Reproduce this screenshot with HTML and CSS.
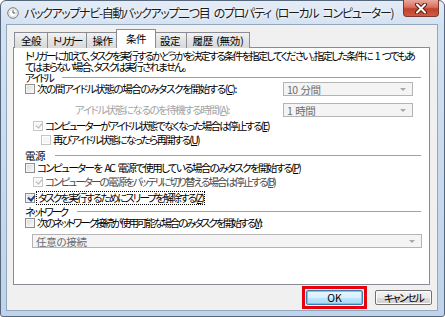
FILE: index.html
```html
<!DOCTYPE html>
<html lang="ja">
<head>
<meta charset="utf-8">
<link rel="stylesheet" href="styles.css">
</head>
<body>
<div class="window">
  <div class="titlebar">
    <svg class="app-icon" width="12" height="12" viewBox="0 0 12 12">
      <circle cx="6" cy="6" r="5.3" fill="#f4f4f4" stroke="#7d7d7d" stroke-width="1"/>
      <circle cx="6" cy="6" r="3.8" fill="#ffffff" stroke="#c8c8c8" stroke-width="0.6"/>
      <path d="M6 3.2V6H8.3" fill="none" stroke="#4d4d4d" stroke-width="1"/>
    </svg>
    <span class="title">バックアップナビ-自動バックアップ二つ目 のプロパティ (ローカル コンピューター)</span>
    <div class="close">
      <svg width="14" height="11" viewBox="0 0 14 11">
        <path d="M3 1.5L11 9.5M11 1.5L3 9.5" stroke="#5a1f17" stroke-width="4" stroke-linecap="round"/>
        <path d="M3 1.5L11 9.5M11 1.5L3 9.5" stroke="#ffffff" stroke-width="2" stroke-linecap="round"/>
      </svg>
    </div>
  </div>
  <div class="client">
    <div class="tabs">
      <div class="tab">全般</div>
      <div class="tab kana">トリガー</div>
      <div class="tab">操作</div>
      <div class="tab selected">条件</div>
      <div class="tab">設定</div>
      <div class="tab wide-tab">履歴 (無効)</div>
    </div>
    <div class="panel">
      <p class="desc">トリガーに加えて、タスクを実行するかどうかを決定する条件を指定してください。指定した条件に 1 つでもあ<br>てはまらない場合、タスクは実行されません。</p>

      <div class="group-head"><span>アイドル</span><i class="rule"></i></div>
      <div class="row r-idle1">
        <span class="chk"></span><span class="lbl ls-1">次の間アイドル状態の場合のみタスクを開始する(<u>C</u>):</span>
        <div class="combo"><span>10 分間</span><i class="arrow"></i></div>
      </div>
      <div class="row r-idle2">
        <span class="lbl ls-2 dim ind-label">アイドル状態になるのを待機する時間(<u>A</u>):</span>
        <div class="combo"><span>1 時間</span><i class="arrow"></i></div>
      </div>
      <div class="row r-idle3 ind1">
        <span class="chk dis checked"></span><span class="lbl">コンピューターがアイドル状態でなくなった場合は停止する(<u>E</u>)</span>
      </div>
      <div class="row r-idle4 ind2">
        <span class="chk dis"></span><span class="lbl">再びアイドル状態になったら再開する(<u>U</u>)</span>
      </div>

      <div class="group-head g-power"><span>電源</span><i class="rule"></i></div>
      <div class="row r-p1">
        <span class="chk"></span><span class="lbl ls-3">コンピューターを AC 電源で使用している場合のみタスクを開始する(<u>P</u>)</span>
      </div>
      <div class="row r-p2 ind1">
        <span class="chk dis checked"></span><span class="lbl ls-4 gray">コンピューターの電源をバッテリに切り替える場合は停止する(<u>B</u>)</span>
      </div>
      <div class="row r-p3">
        <span class="chk checked"></span><span class="lbl ls-4 focus">タスクを実行するためにスリープを解除する(<u>Z</u>)</span>
      </div>

      <div class="group-head g-net"><span>ネットワーク</span><i class="rule"></i></div>
      <div class="row r-n1">
        <span class="chk"></span><span class="lbl ls-5">次のネットワーク接続が使用可能な場合のみタスクを開始する(<u>Y</u>):</span>
      </div>
      <div class="combo wide"><span>任意の接続</span><i class="arrow"></i></div>
    </div>
    <div class="buttons">
      <div class="ok-wrap">
        <div class="btn ok">OK</div>
        <span class="highlight"></span>
      </div>
      <div class="btn">キャンセル</div>
    </div>
  </div>
</div>
</body>
</html>
```

FILE: styles.css
```css
* { box-sizing: border-box; }
html, body { margin: 0; padding: 0; }
body {
  width: 445px;
  height: 317px;
  background: #ffffff;
  font-family: "Noto Sans CJK JP", "Noto Sans", sans-serif;
  font-feature-settings: "palt";
  font-size: 10.5px;
  letter-spacing: -1.75px;
  word-spacing: 2.5px;
  color: #000;
}
.window {
  width: 445px;
  height: 317px;
  border: 1px solid #55677d;
  border-radius: 6px 6px 3px 3px;
  background: linear-gradient(#e4ecf6 0px, #d3e1f1 24px, #bfd3ea 100%);
  padding: 0 6px 5px 5px;
  display: flex;
  flex-direction: column;
}
.titlebar {
  height: 23px;
  display: flex;
  align-items: center;
  position: relative;
}
.app-icon { margin: 0 0 0 1px; flex: none; }
.title {
  margin-left: 5px;
  font-size: 12px;
  letter-spacing: -1.35px;
  word-spacing: 3px;
  color: #1b1b1b;
  text-shadow: 0 0 6px #ffffff, 0 0 3px #ffffff;
  white-space: nowrap;
}
.close {
  position: absolute;
  right: -1px;
  top: -1px;
  width: 36px;
  height: 17px;
  border: 1px solid #7a3a32;
  border-top: none;
  border-radius: 0 0 4px 4px;
  background: linear-gradient(#e9a89c 0%, #d8705f 45%, #c2402a 55%, #cf5c43 100%);
  display: flex;
  align-items: center;
  justify-content: center;
}
.client {
  flex: 1;
  background: #f0f0f0;
  border: 1px solid #93a7bf;
  padding: 4px 7px 0 6px;
  display: flex;
  flex-direction: column;
}
.tabs {
  display: flex;
  padding-left: 1px;
  height: 19px;
  align-items: flex-end;
  position: relative;
  z-index: 1;
  margin-bottom: -1px;
}
.tab {
  height: 16px;
  border: 1px solid #898c95;
  border-bottom: none;
  margin-right: -1px;
  background: linear-gradient(#f2f2f2, #e3e3e3 50%, #d9d9d9);
  display: flex;
  align-items: center;
  justify-content: center;
  white-space: nowrap;
  letter-spacing: -0.5px;
}
.tab:nth-child(1) { width: 34px; }
.tab:nth-child(2) { width: 40px; }
.tab:nth-child(3) { width: 33px; }
.tab:nth-child(5) { width: 34px; }
.tab:nth-child(6) { width: 64px; }
.tab.kana { letter-spacing: -2px; }
.tab.wide-tab { letter-spacing: -0.2px; word-spacing: 1px; }
.tab.selected {
  width: 40px;
  height: 19px;
  background: #ffffff;
  margin-left: -2px;
  margin-right: -3px;
  padding-bottom: 2px;
  position: relative;
  z-index: 2;
}
.panel {
  height: 238px;
  background: #ffffff;
  border: 1px solid #898c95;
  padding: 2px 8px 0 11px;
  display: flex;
  flex-direction: column;
}
.desc {
  margin: 0;
  line-height: 11px;
  white-space: nowrap;
  letter-spacing: -1.85px;
}
.group-head {
  display: flex;
  align-items: center;
  height: 11px;
  letter-spacing: -2.3px;
}
.group-head .rule {
  flex: 1;
  height: 1px;
  background: #a0a0a0;
  margin-left: 10px;
}
.g-power { height: 12px; margin-top: 2px; letter-spacing: -0.5px; }
.g-net { height: 12px; }
.row {
  display: flex;
  align-items: center;
  height: 14px;
  white-space: nowrap;
}
.r-idle1 { margin-top: -1px; }
.r-idle2 { margin-top: 7px; }
.r-idle3 { margin-top: 2px; }
.r-p3 { margin-top: 2px; }
.r-n1 { height: 12px; }
.ind1 { padding-left: 8px; }
.ind2 { padding-left: 16px; }
.ind-label { margin-left: 50px; }
.chk {
  width: 10px;
  height: 10px;
  flex: none;
  border: 1px solid #8f8f8f;
  background: linear-gradient(135deg, #d6d6d6, #f2f2f2 70%, #ffffff);
  box-shadow: inset 0 0 0 1px #f4f4f4;
  margin-right: 2px;
  position: relative;
}
.chk.dis {
  border-color: #c6c6c6;
  background: #f6f6f6;
  box-shadow: inset 0 0 0 1px #ffffff;
}
.chk.checked::after {
  content: "";
  position: absolute;
  left: 2.5px;
  top: 0px;
  width: 3px;
  height: 5px;
  border: solid #233e88;
  border-width: 0 2px 2px 0;
  transform: rotate(40deg);
}
.chk.dis.checked::after { border-color: #b4b4b4; border-width: 0 1px 1px 0; }
.lbl { line-height: 12px; }
.ls-1 { letter-spacing: -1.37px; }
.ls-2 { letter-spacing: -1.46px; }
.ls-3 { letter-spacing: -1.64px; }
.ls-4 { letter-spacing: -1.9px; }
.ls-5 { letter-spacing: -2.2px; }
.dim { color: #a3a3a3; }
.gray { color: #4a4a4a; }
.focus {
  outline: 1px dotted #000;
  outline-offset: 0px;
  padding: 0 1px;
}
.combo {
  margin-left: auto;
  margin-right: 8px;
  width: 130px;
  height: 14px;
  border: 1px solid #b4b4b4;
  background: #f4f4f4;
  color: #6d6d6d;
  display: flex;
  align-items: center;
  padding-left: 3px;
  position: relative;
  letter-spacing: -0.5px;
  word-spacing: 1px;
}
.combo .arrow {
  position: absolute;
  right: 6px;
  top: 5px;
  width: 0;
  height: 0;
  border-left: 3px solid transparent;
  border-right: 3px solid transparent;
  border-top: 3px solid #a8a8a8;
}
.combo.wide {
  margin: 5px 0 0 7px;
  width: 390px;
  letter-spacing: -0.3px;
}
.buttons {
  display: flex;
  justify-content: flex-end;
  gap: 12px;
  margin-top: 5px;
  margin-right: -2px;
}
.ok-wrap { position: relative; }
.btn {
  width: 57px;
  height: 15px;
  border: 1px solid #707070;
  border-radius: 2px;
  background: linear-gradient(#f2f2f2 0%, #ebebeb 50%, #dddddd 51%, #cfcfcf 100%);
  box-shadow: inset 0 0 0 1px #fcfcfc;
  display: flex;
  align-items: center;
  justify-content: center;
  letter-spacing: -1.7px;
}
.btn.ok {
  border-color: #3c7fb1;
  box-shadow: inset 0 0 0 1px #48d8fb;
  background: linear-gradient(#eaf6fd 0%, #d9f0fc 50%, #bee6fd 51%, #a7d9f5 100%);
  letter-spacing: 0;
}
.highlight {
  position: absolute;
  left: -4px;
  top: -4px;
  right: -4px;
  bottom: -4px;
  border: 3px solid #e8000c;
}
```
